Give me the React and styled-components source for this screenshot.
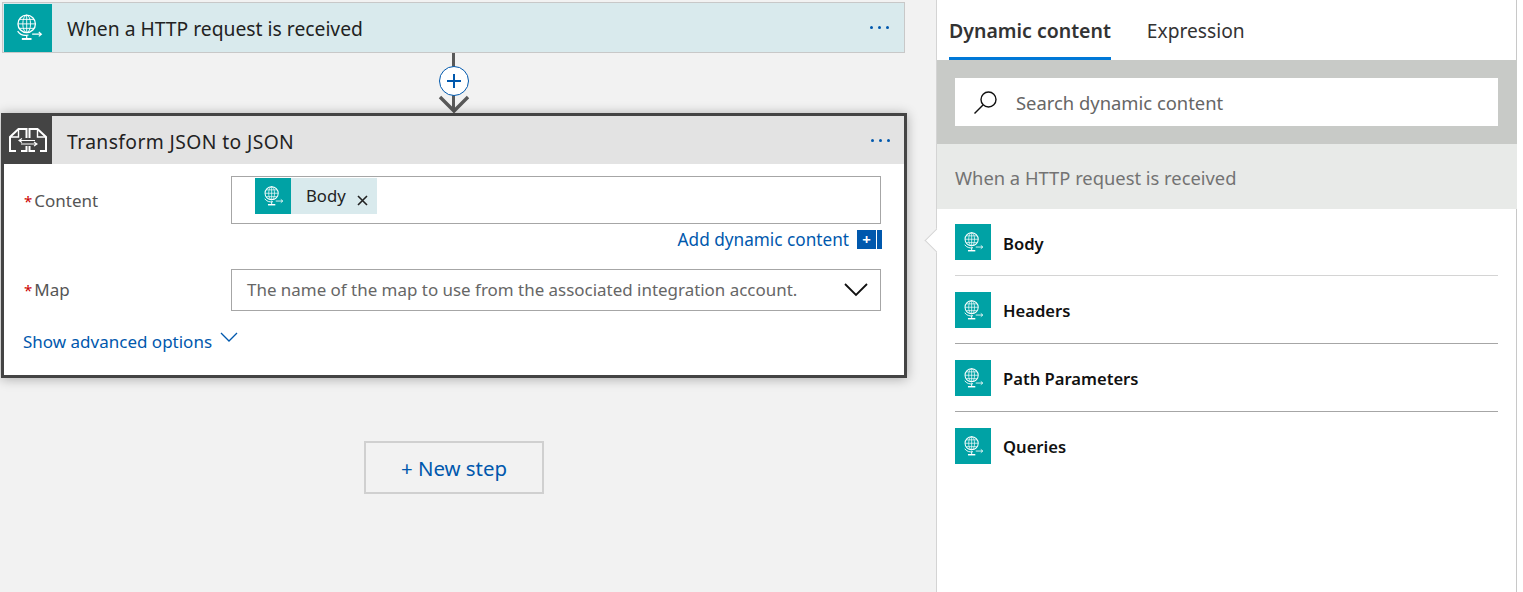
import React from "react";
import styled, { createGlobalStyle } from "styled-components";

const GlobalStyle = createGlobalStyle`
  html, body {
    margin: 0;
    background: #fff;
    font-family: "Noto Sans", "Open Sans", sans-serif;
  }
`;

const Page = styled.div`
  display: flex;
  width: 1517px;
  height: 592px;
  overflow: hidden;
`;

const Canvas = styled.div`
  width: 936px;
  flex: none;
  box-sizing: border-box;
  background: #f2f2f2;
  padding: 2px 0 0 1px;
  display: flex;
  flex-direction: column;
`;

const TriggerCard = styled.div`
  display: flex;
  align-items: center;
  width: 903px;
  height: 51px;
  margin-left: 1px;
  box-sizing: border-box;
  padding: 1px;
  border: 1px solid #c8c8c8;
  background: #d9eaed;
`;

const Tile = styled.div`
  flex: none;
  display: flex;
  align-items: center;
  justify-content: center;
  width: ${(p) => p.$size}px;
  height: ${(p) => p.$size}px;
  background: ${(p) => p.$bg || "#00a2a5"};
`;

const CardTitle = styled.div`
  flex: 1;
  padding: 2px 0 0 15px;
  font-size: 19.3px;
  letter-spacing: ${(p) => p.$track || 0}px;
  color: #222;
`;

const Dots = styled.div`
  display: flex;
  gap: 5px;
  padding-right: 14px;

  span {
    width: 3px;
    height: 3px;
    border-radius: 50%;
    background: #0058ad;
  }
`;

const Connector = styled.div`
  position: relative;
  width: 906px;
  height: 60px;
  flex: none;

  &::before {
    content: "";
    position: absolute;
    left: 451px;
    top: 0;
    bottom: 2px;
    width: 3px;
    background: #595959;
  }

  svg.arrow {
    position: absolute;
    left: 437px;
    top: 41px;
  }
`;

const PlusCircle = styled.div`
  position: absolute;
  left: 438px;
  top: 13px;
  width: 30px;
  height: 30px;
  box-sizing: border-box;
  border: 1.5px solid #0058ad;
  border-radius: 50%;
  background: #fff;
  display: flex;
  align-items: center;
  justify-content: center;
`;

const ActionCard = styled.div`
  width: 906px;
  height: 265px;
  box-sizing: border-box;
  border: 3px solid #444;
  background: #fff;
  box-shadow: 0 1px 11px rgba(0, 0, 0, 0.3);
  position: relative;
  flex: none;
`;

const ActionHeader = styled.div`
  display: flex;
  align-items: center;
  height: 48px;
  background: #e3e3e3;
`;

const ActionBody = styled.div`
  display: flex;
  flex-direction: column;
  padding: 12px 23px 0 19px;
`;

const FieldRow = styled.div`
  display: flex;
  align-items: center;
`;

const Label = styled.div`
  width: 208px;
  flex: none;
  display: flex;
  align-items: baseline;
  padding-bottom: ${(p) => p.$lift || 0}px;
  font-size: 17px;
  color: #555;

  i {
    color: #c00;
    font-style: normal;
    font-size: 15px;
    margin: 0 2px 0 1px;
  }
`;

const TokenInput = styled.div`
  width: 650px;
  height: 48px;
  box-sizing: border-box;
  border: 1px solid #a6a6a6;
  padding: 1px 0 0 23px;
`;

const Token = styled.div`
  display: inline-flex;
  align-items: center;
  width: 122px;
  height: 36px;
  background: #d9eaed;
  font-size: 16.7px;
  color: #222;

  b {
    font-weight: 400;
    margin-left: 15px;
    position: relative;
    top: -1px;
  }

  > svg {
    margin-left: 11px;
    position: relative;
    top: 4px;
  }
`;

const AddRow = styled.div`
  display: flex;
  justify-content: flex-end;
  align-items: center;
  gap: 8px;
  height: 20px;
  margin: 5px 0 20px;
  color: #0058ad;
  font-size: 17.2px;
`;

const AddButton = styled.div`
  display: flex;
  width: 25px;
  height: 19px;
  gap: 1px;
  margin-right: -1px;

  span {
    flex: 1;
    background: #0058ad;
    color: #fff;
    text-align: center;
    font-size: 15px;
    line-height: 18px;
    font-weight: 700;
  }

  em {
    width: 5px;
    background: #0058ad;
  }
`;

const SelectBox = styled.div`
  display: flex;
  align-items: center;
  justify-content: space-between;
  width: 650px;
  height: 42px;
  box-sizing: border-box;
  border: 1px solid #a6a6a6;
  padding: 0 12px 2px 15px;
  font-size: 16.95px;
  color: #666;

  svg {
    position: relative;
    top: 1px;
  }
`;

const AdvancedLink = styled.div`
  display: flex;
  align-items: center;
  gap: 8px;
  margin-top: 19px;
  color: #0058ad;
  font-size: 17px;

  svg {
    position: relative;
    top: -4px;
  }
`;

const NewStep = styled.div`
  width: 180px;
  height: 53px;
  margin: 63px 0 0 363px;
  box-sizing: border-box;
  border: 2px solid #d0d0d0;
  display: flex;
  align-items: center;
  justify-content: center;
  color: #0058ad;
  font-size: 20.4px;
`;

const Panel = styled.div`
  position: relative;
  flex: 1;
  box-sizing: border-box;
  border-left: 1px solid #d4d4d4;
  border-right: 1px solid #c8c8c8;
  background: #fff;
`;

const Notch = styled.div`
  position: absolute;
  left: -9px;
  top: 232px;
  width: 17px;
  height: 17px;
  box-sizing: border-box;
  background: #fff;
  border-left: 1px solid #d4d4d4;
  border-bottom: 1px solid #d4d4d4;
  transform: rotate(45deg);
`;

const Tabs = styled.div`
  display: flex;
  gap: 36px;
  height: 60px;
  padding-left: 12px;
`;

const Tab = styled.div`
  height: 60px;
  box-sizing: border-box;
  padding-top: 17px;
  font-size: ${(p) => (p.$active ? 19.5 : 19.2)}px;
  font-weight: ${(p) => (p.$active ? 600 : 400)};
  color: #333;
  border-bottom: 3px solid ${(p) => (p.$active ? "#0078d7" : "transparent")};
`;

const SearchBand = styled.div`
  height: 84px;
  box-sizing: border-box;
  padding: 18px 19px 18px 18px;
  margin-right: -1px;
  background: #c8cac7;
`;

const SearchBox = styled.div`
  display: flex;
  align-items: center;
  gap: 18px;
  height: 48px;
  padding-left: 18px;
  background: #fff;
  font-size: 18.4px;
  color: #666;
`;

const SectionHead = styled.div`
  display: flex;
  align-items: center;
  height: 65px;
  box-sizing: border-box;
  padding: 1px 0 0 18px;
  margin-right: -1px;
  background: #e8eae8;
  font-size: 18.35px;
  color: #737373;
`;

const List = styled.div`
  padding: 0 18px;
`;

const Item = styled.div`
  display: flex;
  align-items: center;
  gap: 12px;
  height: ${(p) => p.$h}px;
  box-sizing: border-box;
  border-bottom: 1px solid ${(p) => p.$line || "transparent"};
  font-size: 16.6px;
  font-weight: 600;
  color: #111;
`;

const ItemName = styled.span`
  padding-top: 2px;
`;

// thin globe on a stand with an arrow leaving to the right
const Globe = ({ size = 24, color = "#fff" }) => (
  <svg width={size} height={size} viewBox="0 0 24 24" fill="none" stroke={color} strokeWidth="0.75">
    <circle cx="10.5" cy="9" r="7.2" strokeWidth="1.1" />
    <ellipse cx="10.5" cy="9" rx="3.2" ry="7.2" />
    <path d="M3.3 9h14.4M4.5 5.3h12M4.5 12.7h12M10.5 1.8v14.4" />
    <path d="M3 15c2 3 5.5 4 9 3.2M10.5 18.2v2.6" strokeWidth="1" />
    <path d="M6.5 21.5h8" strokeWidth="1.6" />
    <path d="M15 17.5h7.5M20.5 15.7l2.2 1.8-2.2 1.8" strokeWidth="0.9" />
  </svg>
);

const TransformIcon = () => (
  <svg width="40" height="26" viewBox="0 0 40 26" fill="none" stroke="#fff" strokeWidth="2">
    <path d="M8 24H2V10L10.5 2H18.5V11M13 24H18.5V19" />
    <path d="M10.5 2V10H2" strokeWidth="1.4" />
    <path d="M21.5 11V2H29.5L38 10V24H32M27 24H21.5V19" />
    <path d="M29.5 2V10H38" strokeWidth="1.4" />
    <path d="M11 13.5H27M14 11.5L11 13.5L14 15.5M13 17H29M26 15L29 17L26 19" strokeWidth="1.1" />
  </svg>
);

const items = [
  { name: "Body", h: 67, line: "#d4d4d4" },
  { name: "Headers", h: 68, line: "#a6a6a6" },
  { name: "Path Parameters", h: 68, line: "#a6a6a6" },
  { name: "Queries", h: 68 },
];

function App() {
  return (
    <Page>
      <GlobalStyle />
      <Canvas>
        <TriggerCard>
          <Tile $size={48}>
            <Globe size={29} />
          </Tile>
          <CardTitle>When a HTTP request is received</CardTitle>
          <Dots>
            <span />
            <span />
            <span />
          </Dots>
        </TriggerCard>
        <Connector>
          <PlusCircle>
            <svg width="16" height="16" viewBox="0 0 16 16" stroke="#0058ad" strokeWidth="2">
              <path d="M1 8h14M8 1v14" />
            </svg>
          </PlusCircle>
          <svg className="arrow" width="32" height="20" viewBox="0 0 32 20" fill="none" stroke="#595959" strokeWidth="3.4">
            <path d="M2 3l14 14L30 3" />
          </svg>
        </Connector>
        <ActionCard>
          <ActionHeader>
            <Tile $size={48} $bg="#444">
              <TransformIcon />
            </Tile>
            <CardTitle $track={0.4}>Transform JSON to JSON</CardTitle>
            <Dots>
              <span />
              <span />
              <span />
            </Dots>
          </ActionHeader>
          <ActionBody>
            <FieldRow>
              <Label>
                <i>*</i>Content
              </Label>
              <TokenInput>
                <Token>
                  <Tile $size={36}>
                    <Globe size={22} />
                  </Tile>
                  <b>Body</b>
                  <svg width="11" height="11" viewBox="0 0 11 11" stroke="#222" strokeWidth="1.6">
                    <path d="M1 1l9 9M10 1l-9 9" />
                  </svg>
                </Token>
              </TokenInput>
            </FieldRow>
            <AddRow>
              Add dynamic content
              <AddButton>
                <span>+</span>
                <em />
              </AddButton>
            </AddRow>
            <FieldRow>
              <Label $lift={2}>
                <i>*</i>Map
              </Label>
              <SelectBox>
                The name of the map to use from the associated integration account.
                <svg width="24" height="14" viewBox="0 0 24 14" fill="none" stroke="#111" strokeWidth="1.8">
                  <path d="M1 1l11 11L23 1" />
                </svg>
              </SelectBox>
            </FieldRow>
            <AdvancedLink>
              Show advanced options
              <svg width="18" height="11" viewBox="0 0 18 11" fill="none" stroke="#0058ad" strokeWidth="1.3">
                <path d="M1 1l8 8 8-8" />
              </svg>
            </AdvancedLink>
          </ActionBody>
        </ActionCard>
        <NewStep>+ New step</NewStep>
      </Canvas>
      <Panel>
        <Notch />
        <Tabs>
          <Tab $active>Dynamic content</Tab>
          <Tab>Expression</Tab>
        </Tabs>
        <SearchBand>
          <SearchBox>
            <svg width="25" height="25" viewBox="0 0 25 25" fill="none" stroke="#111" strokeWidth="1.4">
              <circle cx="15.5" cy="9.5" r="7.5" />
              <path d="M10 15L1.5 23.5" />
            </svg>
            Search dynamic content
          </SearchBox>
        </SearchBand>
        <SectionHead>When a HTTP request is received</SectionHead>
        <List>
          {items.map((item) => (
            <Item key={item.name} $h={item.h} $line={item.line}>
              <Tile $size={36}>
                <Globe size={22} />
              </Tile>
              <ItemName>{item.name}</ItemName>
            </Item>
          ))}
        </List>
      </Panel>
    </Page>
  );
}

export default App;
